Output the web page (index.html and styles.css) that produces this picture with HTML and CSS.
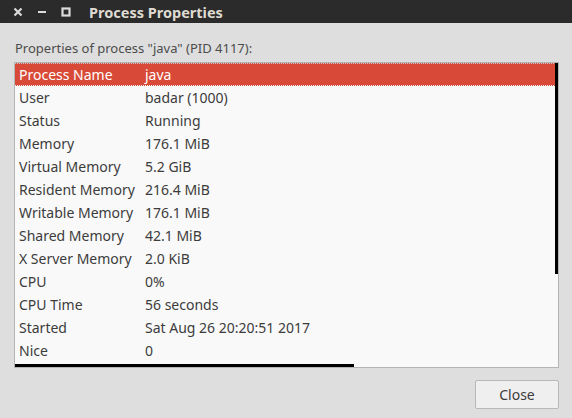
FILE: index.html
```html
<!DOCTYPE html>
<html>
<head>
<meta charset="utf-8">
<link rel="stylesheet" href="styles.css">
</head>
<body>
<div class="window">
  <div class="titlebar">
    <div class="wbtns">
      <svg class="wbtn" width="10" height="10" viewBox="0 0 10 10"><path d="M1.5 1.5 L8.5 8.5 M8.5 1.5 L1.5 8.5" stroke="#dcdcdc" stroke-width="2.2" fill="none"/></svg>
      <svg class="wbtn" width="10" height="10" viewBox="0 0 10 10"><path d="M1 5 L9 5" stroke="#dcdcdc" stroke-width="2" fill="none"/></svg>
      <svg class="wbtn" width="10" height="10" viewBox="0 0 10 10"><rect x="1.5" y="1.5" width="7" height="7" stroke="#dcdcdc" stroke-width="2.2" fill="none"/></svg>
    </div>
    <div class="title">Process Properties</div>
  </div>
  <div class="content">
    <div class="caption">Properties of process "java" (PID 4117):</div>
    <div class="listbox">
      <div class="rows">
        <div class="row selected"><span class="k">Process Name</span><span class="v">java</span></div>
        <div class="row"><span class="k">User</span><span class="v">badar (1000)</span></div>
        <div class="row"><span class="k">Status</span><span class="v">Running</span></div>
        <div class="row"><span class="k">Memory</span><span class="v">176.1 MiB</span></div>
        <div class="row"><span class="k">Virtual Memory</span><span class="v">5.2 GiB</span></div>
        <div class="row"><span class="k">Resident Memory</span><span class="v">216.4 MiB</span></div>
        <div class="row"><span class="k">Writable Memory</span><span class="v">176.1 MiB</span></div>
        <div class="row"><span class="k">Shared Memory</span><span class="v">42.1 MiB</span></div>
        <div class="row"><span class="k">X Server Memory</span><span class="v">2.0 KiB</span></div>
        <div class="row"><span class="k">CPU</span><span class="v">0%</span></div>
        <div class="row"><span class="k">CPU Time</span><span class="v">56 seconds</span></div>
        <div class="row"><span class="k">Started</span><span class="v">Sat Aug 26 20:20:51 2017</span></div>
        <div class="row"><span class="k">Nice</span><span class="v">0</span></div>
      </div>
      <div class="vscroll"></div>
      <div class="hscroll"></div>
    </div>
    <div class="actions">
      <button class="btn">Close</button>
    </div>
  </div>
</div>
</body>
</html>
```
FILE: styles.css
```css
html, body {
  margin: 0;
  padding: 0;
}
body {
  width: 572px;
  height: 418px;
  background: #dedede;
  font-family: "Noto Sans", "DejaVu Sans", sans-serif;
  font-size: 13px;
  color: #3c3c3c;
  overflow: hidden;
}
.titlebar {
  height: 23px;
  background: #2b2b2b;
  display: flex;
  align-items: center;
}
.wbtns {
  display: flex;
  gap: 14px;
  padding-left: 13px;
}
.wbtn {
  display: block;
}
.title {
  margin-left: 18px;
  font-weight: bold;
  font-size: 14.5px;
  color: #dfdbd2;
}
.content {
  padding: 16px 13px 0 14px;
}
.caption {
  height: 23px;
  line-height: 18px;
  color: #4c4c4c;
  padding-left: 1px;
}
.listbox {
  position: relative;
  border: 1px solid #b4b4b4;
  background: #f9f9f9;
  height: 304px;
}
.row {
  display: flex;
  height: 23px;
  line-height: 23px;
  box-sizing: border-box;
  padding-left: 4px;
  font-size: 14px;
}
.row .k {
  width: 126px;
}
.row.selected {
  background: #d84a37;
  color: #ffffff;
  border-top: 1px dotted #c9c9c9;
  border-bottom: 1px dotted #f4f4f4;
  line-height: 21px;
}
.vscroll {
  position: absolute;
  right: 0;
  top: 0;
  width: 3px;
  height: 211px;
  background: #000;
}
.hscroll {
  position: absolute;
  left: 0;
  bottom: 0;
  width: 339px;
  height: 3px;
  background: #000;
}
.actions {
  display: flex;
  justify-content: flex-end;
  padding-top: 12px;
}
.btn {
  width: 84px;
  height: 29px;
  border: 1px solid #b8b8b8;
  border-radius: 2px;
  background: #efefef;
  font-family: inherit;
  font-size: 14px;
  color: #3c3c3c;
  padding: 0;
}
```
